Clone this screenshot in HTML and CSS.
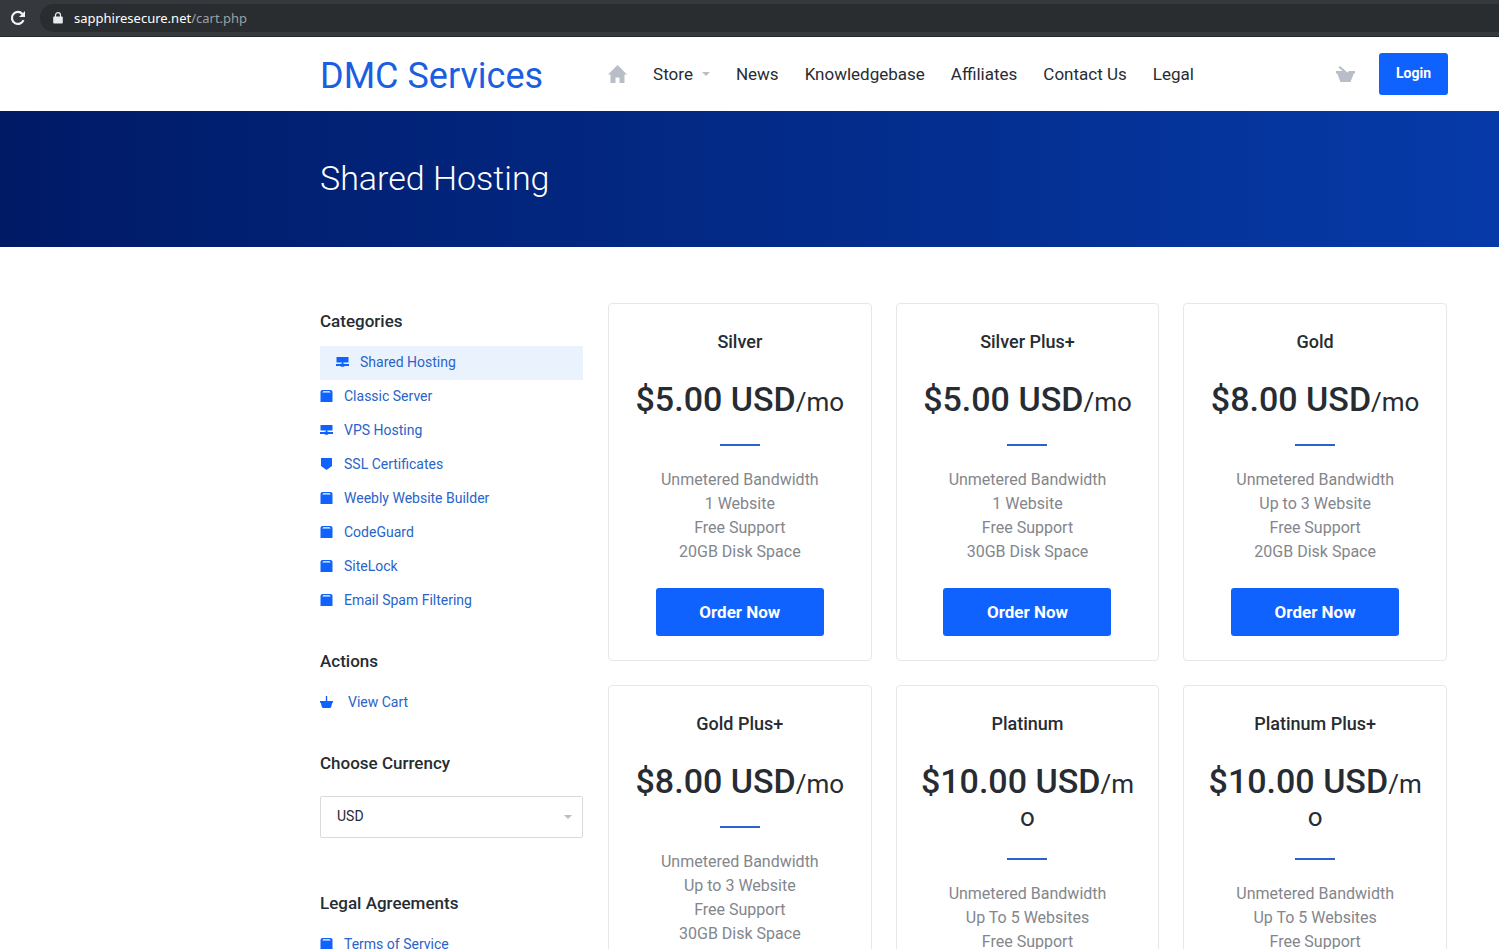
FILE: index.html
```html
<!DOCTYPE html>
<html lang="en">
<head>
<meta charset="UTF-8">
<meta name="viewport" content="width=device-width, initial-scale=1.0">
<title>Shared Hosting - DMC Services</title>
<link rel="stylesheet" href="styles.css">
</head>
<body>

<!-- icons used more than once -->
<svg class="sprite" aria-hidden="true">
  <symbol id="i-server" viewBox="0 0 13 12"><path d="M.5 1h12v5.500H.5zM6 6.500h1.200v1.500H6zM0 8h4.500l.5-.5h3l.5.5H13v2H8.500l-.5.800H5l-.5-.8H0z"/></symbol>
  <symbol id="i-box" viewBox="0 0 13 12"><path fill-rule="evenodd" d="M2.500 0h8a2 2 0 0 1 2 2V12H.5V2a2 2 0 0 1 2-2zM3.200 1.300L2.300 2.600h8.400L9.800 1.300z"/></symbol>
  <symbol id="i-shield" viewBox="0 0 13 12"><path d="M1 0h11v8L6.500 12 1 8z"/></symbol>
  <symbol id="i-cart" viewBox="0 0 13 12"><path d="M5.800 0h1.400v5H13v1.800h-.8l-1 4.200-1 1H2.800l-1-1-1-4.200H0V5h5.800z"/></symbol>
</svg>

<div class="browser">
  <button type="button" class="reload" aria-label="Reload">
    <svg width="16" height="16" viewBox="0 0 16 16"><path d="M13.500 10.200A6 6 0 1 1 12.400 3.900" fill="none" stroke="#f1f3f4" stroke-width="2.200"/><path d="M15 1v6H9z" fill="#f1f3f4"/></svg>
  </button>
  <div class="address">
    <svg width="10" height="12" viewBox="0 0 10 12"><path d="M2.500 5V3.200a2.500 2.500 0 0 1 5 0V5" fill="none" stroke="#e8eaed" stroke-width="1.200"/><path d="M1 4.500h8a.8.8 0 0 1 .8.800v5.400a.8.8 0 0 1-.8.800H1a.8.8 0 0 1-.8-.8V5.300a.8.8 0 0 1 .8-.8z" fill="#e8eaed"/></svg>
    <span>sapphiresecure.net<span class="path">/cart.php</span></span>
  </div>
</div>

<header class="header container">
  <a href="#" class="logo">DMC Services</a>
  <nav class="nav">
    <a href="#" aria-label="Home"><svg width="19" height="18" viewBox="0 0 19 18"><path d="M9.500 0L19 9.500h-2.500V18h-5v-5.500h-4V18h-5V9.500H0z" fill="#b9bdc7"/></svg></a>
    <a href="#">Store <span class="caret"></span></a>
    <a href="#">News</a>
    <a href="#">Knowledgebase</a>
    <a href="#">Affiliates</a>
    <a href="#">Contact Us</a>
    <a href="#">Legal</a>
  </nav>
  <a href="#" class="basket" aria-label="Cart"><svg width="19" height="16" viewBox="0 0 19 16"><path d="M2.500 1.500L4 0l7.500 6.500L13 5h6v2.500h-1.200L14.500 16h-10L1.200 7.500H0V5h6.500z" fill="#b9bdc7"/></svg></a>
  <button type="button" class="btn login">Login</button>
</header>

<div class="hero container">
  <h1>Shared Hosting</h1>
</div>

<div class="content container">
  <aside class="sidebar">
    <section>
      <h2>Categories</h2>
      <ul>
        <li class="active"><a href="#"><svg><use href="#i-server"/></svg>Shared Hosting</a></li>
        <li><a href="#"><svg><use href="#i-box"/></svg>Classic Server</a></li>
        <li><a href="#"><svg><use href="#i-server"/></svg>VPS Hosting</a></li>
        <li><a href="#"><svg><use href="#i-shield"/></svg>SSL Certificates</a></li>
        <li><a href="#"><svg><use href="#i-box"/></svg>Weebly Website Builder</a></li>
        <li><a href="#"><svg><use href="#i-box"/></svg>CodeGuard</a></li>
        <li><a href="#"><svg><use href="#i-box"/></svg>SiteLock</a></li>
        <li><a href="#"><svg><use href="#i-box"/></svg>Email Spam Filtering</a></li>
      </ul>
    </section>
    <section>
      <h2>Actions</h2>
      <ul class="actions">
        <li><a href="#"><svg><use href="#i-cart"/></svg>View Cart</a></li>
      </ul>
    </section>
    <section>
      <h2><label for="currency">Choose Currency</label></h2>
      <div class="select">
        <select id="currency">
          <option>USD</option>
        </select>
        <span class="caret"></span>
      </div>
    </section>
    <section>
      <h2>Legal Agreements</h2>
      <ul>
        <li><a href="#"><svg><use href="#i-box"/></svg>Terms of Service</a></li>
      </ul>
    </section>
  </aside>

  <main class="plans">
    <article class="plan">
      <h3>Silver</h3>
      <p class="price"><span>$5.00 USD</span>/mo</p>
      <hr>
      <ul>
        <li>Unmetered Bandwidth</li>
        <li>1 Website</li>
        <li>Free Support</li>
        <li>20GB Disk Space</li>
      </ul>
      <button type="button" class="btn order">Order Now</button>
    </article>
    <article class="plan">
      <h3>Silver Plus+</h3>
      <p class="price"><span>$5.00 USD</span>/mo</p>
      <hr>
      <ul>
        <li>Unmetered Bandwidth</li>
        <li>1 Website</li>
        <li>Free Support</li>
        <li>30GB Disk Space</li>
      </ul>
      <button type="button" class="btn order">Order Now</button>
    </article>
    <article class="plan">
      <h3>Gold</h3>
      <p class="price"><span>$8.00 USD</span>/mo</p>
      <hr>
      <ul>
        <li>Unmetered Bandwidth</li>
        <li>Up to 3 Website</li>
        <li>Free Support</li>
        <li>20GB Disk Space</li>
      </ul>
      <button type="button" class="btn order">Order Now</button>
    </article>
    <article class="plan">
      <h3>Gold Plus+</h3>
      <p class="price"><span>$8.00 USD</span>/mo</p>
      <hr>
      <ul>
        <li>Unmetered Bandwidth</li>
        <li>Up to 3 Website</li>
        <li>Free Support</li>
        <li>30GB Disk Space</li>
      </ul>
    </article>
    <article class="plan">
      <h3>Platinum</h3>
      <p class="price"><span>$10.00 USD</span>/mo</p>
      <hr>
      <ul>
        <li>Unmetered Bandwidth</li>
        <li>Up To 5 Websites</li>
        <li>Free Support</li>
      </ul>
    </article>
    <article class="plan">
      <h3>Platinum Plus+</h3>
      <p class="price"><span>$10.00 USD</span>/mo</p>
      <hr>
      <ul>
        <li>Unmetered Bandwidth</li>
        <li>Up To 5 Websites</li>
        <li>Free Support</li>
      </ul>
    </article>
  </main>
</div>

</body>
</html>
```

FILE: styles.css
```css
* {
  box-sizing: border-box;
}
html {
  height: 100%;
  overflow: hidden;
}
body {
  margin: 0;
  height: 100%;
  overflow: hidden;
  font-family: Roboto, Arial, sans-serif;
  font-size: 16px;
  color: #272c33;
  background-color: #fff;
}
h1, h2, h3, p, ul {
  margin: 0;
  padding: 0;
}
ul {
  list-style: none;
}
a {
  color: inherit;
  text-decoration: none;
}
svg {
  flex-shrink: 0;
}
.sprite {
  position: absolute;
  width: 0;
  height: 0;
}

.container {
  padding-left: 320px;
  padding-right: 51px;
}

/* browser bar */
.browser {
  display: flex;
  align-items: center;
  gap: 14px;
  height: 37px;
  padding-left: 10px;
  background-color: #35393d;
  border-bottom: 1px solid #26292c;
}
.reload {
  display: flex;
  padding: 0;
  border: none;
  background: none;
}
.address {
  flex: 1;
  display: flex;
  align-items: center;
  gap: 11px;
  height: 28px;
  padding-left: 13px;
  border-radius: 14px 0 0 14px;
  background-color: #292d30;
  color: #fff;
  font-family: "Noto Sans", "Open Sans", sans-serif;
  font-size: 13px;
}
.path {
  color: #9aa0a6;
}

/* header */
.header {
  display: flex;
  align-items: center;
  height: 74px;
}
.logo {
  padding-top: 4px;
  color: #1b5fe0;
  font-size: 36px;
  line-height: 40px;
}
.nav {
  flex: 1;
  display: flex;
  align-items: center;
  gap: 26px;
  margin-left: 65px;
  font-size: 17px;
}
.nav a {
  display: flex;
  align-items: center;
  gap: 9px;
}
.caret {
  border: 4px solid transparent;
  border-top-color: #b9bdc7;
  border-bottom: none;
}
.basket {
  display: flex;
  margin-right: 24px;
}
.btn {
  border: none;
  border-radius: 3px;
  background-color: #1062fe;
  color: #fff;
  font-family: inherit;
  font-weight: 700;
  cursor: pointer;
}
.login {
  height: 42px;
  padding: 0 17px 2px;
  font-size: 14px;
}

.hero {
  display: flex;
  align-items: center;
  height: 136px;
  padding-bottom: 2px;
  background: linear-gradient(90deg, #001a66, #063aa8);
  color: #fff;
}
.hero h1 {
  font-size: 34px;
  font-weight: 300;
}

.content {
  display: grid;
  grid-template-columns: 263px 1fr;
  align-items: start;
  gap: 25px;
  padding-top: 56px;
  padding-right: 52px;
}

/* sidebar */
.sidebar {
  padding-top: 5px;
}
.sidebar section {
  margin-bottom: 30px;
}
.sidebar h2 {
  margin-bottom: 12px;
  font-size: 17px;
  font-weight: 500;
  line-height: 26px;
}
.sidebar li a {
  display: flex;
  align-items: center;
  gap: 11px;
  height: 34px;
  padding-bottom: 2px;
  color: #2a63c9;
  font-size: 14px;
}
.sidebar li svg {
  width: 13px;
  height: 12px;
  fill: #1062fe;
}
.sidebar .active a {
  padding-left: 16px;
  background-color: #eaf3fd;
}
.sidebar .actions a {
  gap: 15px;
}
.select {
  position: relative;
  padding: 8px 0 22px;
}
.select select {
  appearance: none;
  display: block;
  width: 100%;
  height: 42px;
  padding: 0 16px 2px;
  border: 1px solid #d9dadd;
  border-radius: 2px;
  background-color: #fff;
  color: #272c33;
  font-family: inherit;
  font-size: 14px;
}
.select .caret {
  position: absolute;
  top: 27px;
  right: 11px;
}

/* plans */
.plans {
  display: grid;
  grid-template-columns: repeat(3, 1fr);
  gap: 24px;
}
.plan {
  display: flex;
  flex-direction: column;
  align-items: center;
  padding: 24px;
  border: 1px solid #e6e7e9;
  border-radius: 4px;
  text-align: center;
}
.plan h3 {
  margin-bottom: 23px;
  font-size: 18px;
  font-weight: 500;
  line-height: 28px;
}
.price {
  font-size: 26px;
  line-height: 32px;
  word-break: break-all;
}
.price span {
  font-size: 34px;
  font-weight: 500;
  line-height: 40px;
}
.plan hr {
  width: 40px;
  height: 2px;
  margin: 25px 0 22px;
  border: none;
  background-color: #2a63c9;
}
.plan li {
  color: #83868c;
  line-height: 24px;
}
.order {
  width: 168px;
  height: 48px;
  margin-top: 24px;
  font-size: 17px;
}
```
